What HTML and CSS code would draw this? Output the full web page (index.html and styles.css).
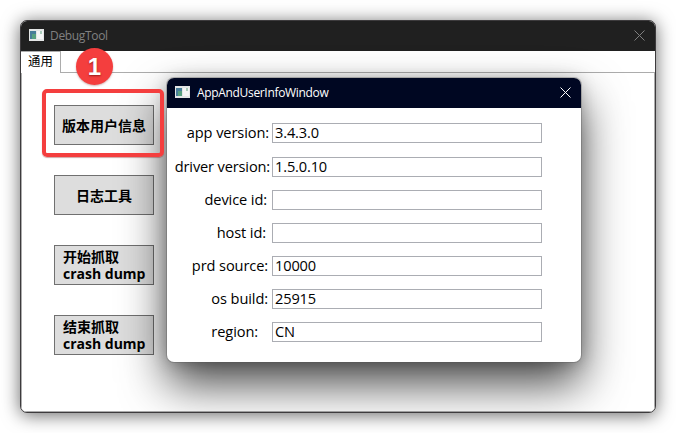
FILE: index.html
```
<!DOCTYPE html>
<html lang="zh-CN">
<head>
<meta charset="utf-8">
<title>DebugTool</title>
<link rel="stylesheet" href="styles.css">
</head>
<body>
<main class="window">
  <header class="titlebar">
    <svg class="app-icon" width="15" height="12" viewBox="0 0 15 12"><path fill="#e4e6e6" d="M0 0h15v12H0z"/><path fill="#487d99" d="M1 2h6v8H1z"/><path fill="#58a080" d="M3 5h4v5H3z"/><path fill="#f5f5f5" d="M8 2h6v8H8z"/><path fill="#a9cbb9" d="M11 2h2v3h-2z"/></svg>
    <span class="title main-title">DebugTool</span>
    <svg class="close" width="11" height="11" viewBox="0 0 11 11"><path d="M.5.5l10 10M10.5.5l-10 10"/></svg>
  </header>
  <nav class="tabs"><span class="tab">通用</span></nav>
  <section class="panel">
    <button class="action">版本用户信息</button>
    <button class="action">日志工具</button>
    <button class="action left"><span class="line">开始抓取</span><span class="line latin">crash dump</span></button>
    <button class="action left"><span class="line">结束抓取</span><span class="line latin">crash dump</span></button>
  </section>
  <section class="dialog">
    <header class="titlebar dialog-bar">
      <svg class="app-icon" width="15" height="12" viewBox="0 0 15 12"><path fill="#e4e6e6" d="M0 0h15v12H0z"/><path fill="#487d99" d="M1 2h6v8H1z"/><path fill="#58a080" d="M3 5h4v5H3z"/><path fill="#f5f5f5" d="M8 2h6v8H8z"/><path fill="#a9cbb9" d="M11 2h2v3h-2z"/></svg>
      <span class="title dialog-title">AppAndUserInfoWindow</span>
      <svg class="close" width="11" height="11" viewBox="0 0 11 11"><path d="M.5.5l10 10M10.5.5l-10 10"/></svg>
    </header>
    <div class="form">
      <div class="row first"><span class="label app">app version:</span><span class="field">3.4.3.0</span></div>
      <div class="row"><span class="label driver">driver version:</span><span class="field">1.5.0.10</span></div>
      <div class="row"><span class="label device">device id:</span><span class="field"></span></div>
      <div class="row"><span class="label host">host id:</span><span class="field"></span></div>
      <div class="row"><span class="label source">prd source:</span><span class="field">10000</span></div>
      <div class="row"><span class="label build">os build:</span><span class="field">25915</span></div>
      <div class="row"><span class="label region">region:</span><span class="field">CN</span></div>
    </div>
  </section>
</main>
<div class="highlight"></div>
<div class="step">1</div>
</body>
</html>
```
FILE: styles.css
```
* { box-sizing: border-box; }
body {
  margin: 0;
  padding: 20px;
  width: 676px;
  height: 433px;
  overflow: hidden;
  background: #fff;
  color: #000;
  font-family: "Open Sans", "Noto Sans CJK SC", sans-serif;
}
.window {
  position: relative;
  width: 636px;
  height: 393px;
  border: 1px solid #3d3b3d;
  border-radius: 7px;
  background: #fff;
  overflow: hidden;
  box-shadow: 0 2px 18px rgba(0, 0, 0, .6);
}
.titlebar {
  display: flex;
  align-items: center;
  height: 30px;
  padding: 0 10px 2px 8px;
  background: #202020;
  color: #808080;
}
.app-icon { flex: none; }
.title { margin-left: 6px; font-size: 12px; line-height: 16px; white-space: nowrap; }
.main-title { padding-top: 2px; letter-spacing: -.33px; }
.dialog-title { padding-top: 2px; margin-left: 7px; letter-spacing: -.33px; }
.close { margin-left: auto; fill: none; stroke: currentColor; stroke-width: 1; }
.tabs { display: flex; height: 22px; border-bottom: 1px solid #acacac; }
.tab {
  width: 40px;
  height: 22px;
  padding-left: 7px;
  border: 1px solid #acacac;
  border-width: 1px 1px 0 0;
  background: #fff;
  font: 12.4px/19px "Noto Sans CJK SC", sans-serif;
}
.panel {
  display: flex;
  flex-direction: column;
  align-items: flex-start;
  gap: 30px;
  height: 339px;
  padding: 32px 0 0 32px;
  border: 1px solid #acacac;
  border-top: 0;
}
.action {
  width: 100px;
  height: 40px;
  padding: 0;
  border: 1px solid #707070;
  border-radius: 0;
  background: #ddd;
  color: #000;
  font: bold 14px/17px "Noto Sans CJK SC", sans-serif;
  white-space: nowrap;
}
.left { padding-left: 8px; text-align: left; }
.line { display: block; height: 17px; }
.latin { font-family: "Open Sans", sans-serif; line-height: 18px; }
.dialog {
  position: absolute;
  left: 146px;
  top: 57px;
  width: 414px;
  height: 284px;
  border-radius: 7px;
  background: #fff;
  box-shadow: 0 0 0 1px rgba(90, 90, 90, .35), 0 22px 46px rgba(0, 0, 0, .72), 0 1px 16px rgba(0, 0, 0, .22);
}
.dialog-bar { border-radius: 7px 7px 0 0; background: #000722; color: #fff; }
.form { padding: 15px 0 0 5px; }
.row { display: flex; height: 20px; margin-bottom: 13px; }
.first { margin-bottom: 14px; }
.label {
  width: 98px;
  flex: none;
  margin-right: 2px;
  font-size: 14.6px;
  line-height: 19px;
  text-align: right;
  letter-spacing: -.1px;
  white-space: nowrap;
}
.label.app { padding-right: 1px; }
.label.driver { padding-right: 0; letter-spacing: -.15px; }
.label.device { padding-right: 3px; }
.label.host { padding-right: 4px; }
.label.source { padding-right: 2px; }
.label.build { padding-right: 2px; }
.label.region { padding-right: 12px; }
.field {
  width: 270px;
  height: 20px;
  padding-left: 2px;
  border: 1px solid #abadb3;
  font-size: 14.6px;
  line-height: 17px;
  letter-spacing: -.15px;
}
.highlight {
  position: absolute;
  left: 42px;
  top: 89px;
  width: 122px;
  height: 68px;
  border: 4px solid #f43e3e;
  border-radius: 5px;
  box-shadow: 0 1px 1px rgba(120, 0, 0, .35);
}
.step {
  position: absolute;
  left: 76px;
  top: 48px;
  width: 37px;
  height: 37px;
  border-radius: 50%;
  background: #f43e3e;
  color: #fff;
  font: bold 24px/37px "Liberation Sans", sans-serif;
  text-align: center;
  text-shadow: 0 1px 2px rgba(90, 0, 0, .6);
  box-shadow: 0 1px 2px rgba(100, 0, 0, .3);
}
```
